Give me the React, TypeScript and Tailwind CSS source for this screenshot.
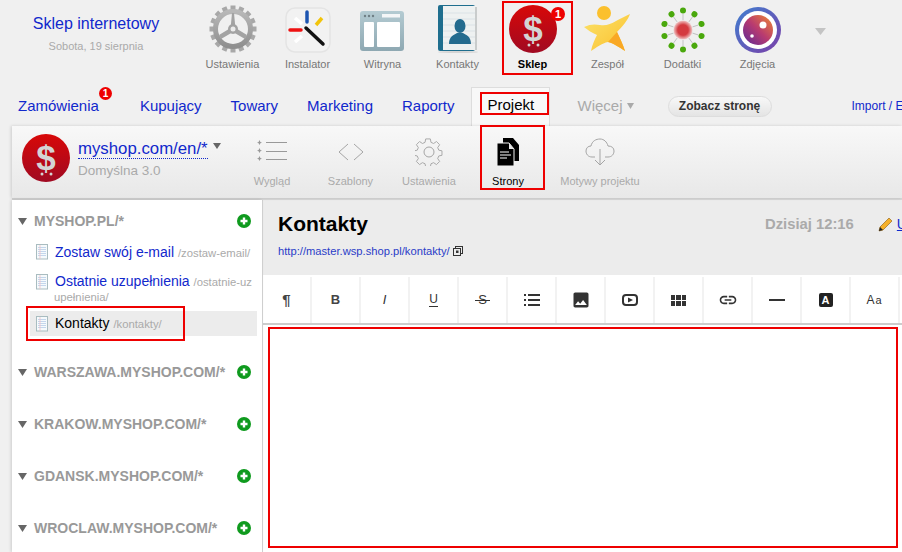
import { MdImage, MdLink } from "react-icons/md";

const FONT = "font-['Liberation_Sans',Arial,sans-serif]";

function ShopLogo({ size }: { size: number }) {
  return (
    <svg width={size} height={size} viewBox="0 0 48 48">
      <defs>
        <linearGradient id={"shop" + size} x1="0" y1="0" x2="0" y2="1">
          <stop offset="0" stopColor="#d80808" />
          <stop offset="1" stopColor="#a00a22" />
        </linearGradient>
      </defs>
      <circle cx="24" cy="24" r="24" fill={"url(#shop" + size + ")"} />
      <text x="24" y="36" textAnchor="middle" fontSize="35" fontWeight="700" fill="#d4d4d4" fontFamily="Liberation Sans">$</text>
      <circle cx="20" cy="40" r="1.5" fill="#d4d4d4" />
      <circle cx="29" cy="40" r="1.5" fill="#d4d4d4" />
    </svg>
  );
}

function GearIcon() {
  const teeth = Array.from({ length: 16 }, (_, i) => i * 22.5);
  return (
    <svg width="48" height="48" viewBox="0 0 48 48">
      <defs>
        <linearGradient id="gear" x1="0" y1="0" x2="0" y2="1">
          <stop offset="0" stopColor="#b8b8b8" />
          <stop offset="1" stopColor="#8f8f8f" />
        </linearGradient>
      </defs>
      {teeth.map((a) => (
        <rect key={a} x="21.5" y="0.5" width="5" height="7" fill="#a8a8a8" transform={`rotate(${a} 24 24)`} />
      ))}
      <circle cx="24" cy="24" r="17.5" fill="none" stroke="url(#gear)" strokeWidth="5" />
      <path d="M21.5 24 L23 8 h2 L26.5 24 Z M24 21.5 L38 30 L36 34 L24 27 Z M24 21.5 L10 30 L12 34 L24 27 Z" fill="#a3a3a3" />
      <circle cx="24" cy="24" r="5" fill="#a3a3a3" />
      <circle cx="24" cy="24" r="2.5" fill="#ececec" />
    </svg>
  );
}

function InstallerIcon() {
  return (
    <svg width="46" height="46" viewBox="0 0 46 46">
      <rect x="1" y="1" width="44" height="44" rx="9" fill="#f2f2f2" stroke="#e4e4e4" strokeWidth="1.5" />
      <path d="M22 5 v10" stroke="#1c54b0" strokeWidth="3.5" strokeLinecap="round" />
      <path d="M37 11 l-6 7" stroke="#f2c40a" strokeWidth="3.5" />
      <path d="M5 23 h11" stroke="#ee1111" strokeWidth="3.5" strokeLinecap="round" />
      <path d="M10 11 l7 6 M10 35 l7 -6" stroke="#ffffff" strokeWidth="3.5" />
      <path d="M21 21 L38 37" stroke="#111111" strokeWidth="3.5" strokeLinecap="round" />
    </svg>
  );
}

function SiteIcon() {
  return (
    <svg width="46" height="42" viewBox="0 0 46 42">
      <defs>
        <linearGradient id="site" x1="0" y1="0" x2="0" y2="1">
          <stop offset="0" stopColor="#b4cbd2" />
          <stop offset="1" stopColor="#8ea8b2" />
        </linearGradient>
      </defs>
      <rect x="0" y="0" width="44" height="40" rx="3" fill="url(#site)" />
      <circle cx="5" cy="5" r="1.2" fill="#707f86" />
      <circle cx="9" cy="5" r="1.2" fill="#707f86" />
      <circle cx="13" cy="5" r="1.2" fill="#707f86" />
      <rect x="22" y="3" width="18" height="3.5" fill="#f4f6f7" />
      <rect x="4" y="11" width="10" height="25" rx="1" fill="#ffffff" />
      <rect x="17" y="11" width="23" height="25" rx="1" fill="#ffffff" />
    </svg>
  );
}

function ContactsIcon() {
  return (
    <svg width="46" height="48" viewBox="0 0 46 48">
      <rect x="3" y="0" width="37" height="46" rx="2" fill="#1f6e8e" />
      <rect x="8" y="1" width="32" height="44" fill="#eef1f1" />
      <path d="M8 8 h32 M8 14 h32 M8 20 h32 M8 26 h32 M8 32 h32 M8 38 h32" stroke="#dbe2e6" strokeWidth="1" />
      <ellipse cx="25" cy="21" rx="5.5" ry="7" fill="#246b8e" />
      <path d="M14 39 c0-8 5-9 8-11 h6 c3 2 8 3 8 11 Z" fill="#246b8e" />
      <rect x="40" y="2" width="2" height="43" fill="#c9cccc" />
      <ellipse cx="23" cy="47" rx="20" ry="1" fill="#d4d4d4" />
    </svg>
  );
}

function StarIcon() {
  return (
    <svg width="48" height="48" viewBox="0 0 48 48">
      <defs>
        <linearGradient id="star" x1="0" y1="0" x2="1" y2="1">
          <stop offset="0" stopColor="#fbe26a" />
          <stop offset="1" stopColor="#fbc02d" />
        </linearGradient>
      </defs>
      <circle cx="20" cy="8" r="7" fill="#fbc02d" />
      <path d="M0 22 C6 19 11 19 16 20 C22 21 27 19 32 16 C37 13 42 11 46 9 C44 15 38 22 33 27 C36 33 39 40 41 46 C35 42 29 38 24 37 C18 38 12 43 7 46 C8 40 11 34 13 30 C8 28 4 25 0 22 Z" fill="url(#star)" />
      <path d="M33 27 C36 33 39 40 41 46 C35 42 29 38 24 37 Z" fill="#f9a825" />
    </svg>
  );
}

function AddonsIcon() {
  const angles = Array.from({ length: 10 }, (_, i) => i * 36);
  return (
    <svg width="46" height="46" viewBox="0 0 46 46">
      <defs>
        <radialGradient id="addon">
          <stop offset="0.55" stopColor="#d43a3f" />
          <stop offset="1" stopColor="#f0c8c8" />
        </radialGradient>
      </defs>
      {angles.map((a) => (
        <g key={a} transform={`rotate(${a} 23 23)`}>
          <path d="M23 7 V13" stroke="#b9b9b9" strokeWidth="0.8" />
          <circle cx="23" cy="3.5" r="3" fill="#4aa80c" />
        </g>
      ))}
      <circle cx="23" cy="23" r="9.5" fill="url(#addon)" />
    </svg>
  );
}

function PhotosIcon() {
  return (
    <svg width="46" height="46" viewBox="0 0 46 46">
      <defs>
        <linearGradient id="ring" x1="0" y1="0" x2="1" y2="1">
          <stop offset="0" stopColor="#3f7fd0" />
          <stop offset="1" stopColor="#7b3fa8" />
        </linearGradient>
        <linearGradient id="lens" x1="1" y1="0" x2="0" y2="1">
          <stop offset="0" stopColor="#f08a30" />
          <stop offset="0.5" stopColor="#b83a70" />
          <stop offset="1" stopColor="#5a2a9a" />
        </linearGradient>
      </defs>
      <circle cx="23" cy="23" r="23" fill="url(#ring)" />
      <circle cx="23" cy="23" r="19" fill="#ffffff" />
      <circle cx="23" cy="23" r="15" fill="url(#lens)" />
      <circle cx="28" cy="18" r="3.5" fill="#ffffff" />
      <circle cx="17" cy="29" r="1.8" fill="#ffffff" />
    </svg>
  );
}

function PlusIcon() {
  return (
    <svg width="14" height="14" viewBox="0 0 14 14" className="shrink-0">
      <circle cx="7" cy="7" r="7" fill="#0f9a1e" />
      <path d="M7 3.5 v7 M3.5 7 h7" stroke="#ffffff" strokeWidth="2.4" />
    </svg>
  );
}

function PageIcon() {
  return (
    <svg width="14" height="16" viewBox="0 0 14 16" className="shrink-0">
      <rect x="1.5" y="0.5" width="11" height="14.5" fill="#f6fafc" stroke="#a9bcc0" />
      <path d="M3 3.5 h8 M3 5.5 h8 M3 7.5 h8 M3 9.5 h8 M3 11.5 h8" stroke="#c4d6ec" />
      <path d="M5 1 v14" stroke="#f0c0c8" strokeWidth="0.8" />
    </svg>
  );
}

function Triangle({ className }: { className: string }) {
  return (
    <svg viewBox="0 0 10 8" preserveAspectRatio="none" className={className}>
      <path d="M0 0 H10 L5 8 Z" fill="currentColor" />
    </svg>
  );
}

function TopItem({ label, icon, active, badge }: { label: string; icon: React.ReactNode; active?: boolean; badge?: boolean }) {
  return (
    <div className="relative flex h-[72px] w-[75px] shrink-0 flex-col items-center">
      <div className="flex h-[51px] items-end justify-center">{icon}</div>
      <div className={active ? "mt-[4px] text-[11px] leading-[14px] font-bold text-black" : "mt-[4px] text-[11px] leading-[14px] text-[#777]"}>{label}</div>
      {badge && (
        <span className="absolute top-[5px] left-[56px] flex h-[14px] w-[14px] items-center justify-center rounded-full bg-[#ee0000] text-[11px] font-bold text-white">1</span>
      )}
      {active && <div className="absolute -top-[1px] left-[7px] h-[74px] w-[71px] border-2 border-[#ee0000]" />}
    </div>
  );
}

function Tool({ label, icon, width, active }: { label: string; icon: React.ReactNode; width: string; active?: boolean }) {
  return (
    <div className={"flex shrink-0 flex-col items-center " + width}>
      <div className="flex h-[44px] items-center justify-center">{icon}</div>
      <div className={active ? "text-[11px] leading-[14px] text-black" : "text-[11px] leading-[14px] text-[#aaa]"}>{label}</div>
    </div>
  );
}

function Group({ name }: { name: string }) {
  return (
    <div className="flex h-[52px] items-center pr-[11px] pl-[6px]">
      <Triangle className="mr-[7px] h-[7px] w-[9px] shrink-0 text-[#666]" />
      <div className="flex-1 text-[14px] font-bold text-[#999]">{name}</div>
      <PlusIcon />
    </div>
  );
}

function Cell({ children }: { children: React.ReactNode }) {
  return <div className="flex h-full w-[49px] shrink-0 items-center justify-center border-r-2 border-[#f2f2f2] text-[#333]">{children}</div>;
}

export default function App() {
  return (
    <div className={"relative h-[552px] w-[902px] overflow-hidden bg-[#f0f0f0] " + FONT}>
      {/* top icons */}
      <div className="flex h-[86px] pt-[2px]">
        <div className="mr-[3px] flex w-[192px] shrink-0 flex-col items-center pt-[12px]">
          <div className="text-[16px] leading-[20px] text-[#1128cc]">Sklep internetowy</div>
          <div className="mt-[5px] text-[11px] leading-[14px] text-[#aaa]">Sobota, 19 sierpnia</div>
        </div>
        <TopItem label="Ustawienia" icon={<GearIcon />} />
        <TopItem label="Instalator" icon={<InstallerIcon />} />
        <TopItem label="Witryna" icon={<SiteIcon />} />
        <TopItem label="Kontakty" icon={<ContactsIcon />} />
        <TopItem label="Sklep" icon={<ShopLogo size={48} />} active badge />
        <TopItem label="Zespół" icon={<StarIcon />} />
        <TopItem label="Dodatki" icon={<AddonsIcon />} />
        <TopItem label="Zdjęcia" icon={<PhotosIcon />} />
        <Triangle className="mt-[26px] ml-[20px] h-[7px] w-[11px] text-[#c4c4c4]" />
      </div>

      {/* tabs */}
      <div className="flex h-[40px] items-center pl-[18px] text-[15px] text-[#1128cc]">
        <div className="relative mr-[41px]">
          Zamówienia
          <span className="absolute -top-[8px] left-[81px] flex h-[13px] w-[13px] items-center justify-center rounded-full bg-[#ee0000] text-[10px] font-bold text-white">1</span>
        </div>
        <div className="mr-[29px]">Kupujący</div>
        <div className="mr-[29px]">Towary</div>
        <div className="mr-[29px]">Marketing</div>
        <div className="mr-[16px]">Raporty</div>
        <div className="relative mt-[1px] flex h-[39px] w-[79px] shrink-0 items-center self-end border border-b-0 border-[#dddddd] bg-[#f8f8f8] pb-[4px] pl-[16px] text-black">
          Projekt
          <div className="absolute top-[4px] left-[8px] h-[23px] w-[69px] border-2 border-[#ee0000]" />
        </div>
        <div className="ml-[28px] flex items-center text-[#aaa]">
          Więcej
          <Triangle className="ml-[4px] h-[6px] w-[7px]" />
        </div>
        <div className="ml-[34px] flex h-[21px] w-[104px] shrink-0 items-center justify-center rounded-full border border-[#dddddd] bg-gradient-to-b from-[#f8f8f8] to-[#e4e4e4] text-[12px] font-bold whitespace-nowrap text-[#333]">Zobacz stronę</div>
        <div className="ml-[80px] text-[12px] whitespace-nowrap">Import / Eksport</div>
      </div>

      {/* panel */}
      <div className="relative ml-[12px] flex h-[72px] bg-gradient-to-b from-[#f8f8f8] to-[#e8e8e8] shadow-[-1px_0_3px_rgba(0,0,0,0.15)]">
        <div className="ml-[10px] mt-[8px] shrink-0">
          <ShopLogo size={48} />
        </div>
        <div className="ml-[8px] w-[145px] shrink-0 pt-[13px]">
          <div className="flex items-start">
            <span className="border-b border-dotted border-[#1128cc] text-[16.8px] leading-[19px] whitespace-nowrap text-[#1128cc]">myshop.com/en/*</span>
            <Triangle className="mt-[4px] ml-[5px] h-[6px] w-[8px] shrink-0 text-[#666]" />
          </div>
          <div className="mt-[3px] text-[13.5px] leading-[18px] text-[#aaa]">Domyślna 3.0</div>
        </div>
        <div className="flex pt-[4px]">
          <Tool
            label="Wygląd"
            width="w-[78px] ml-[10px]"
            icon={
              <svg width="30" height="24" viewBox="0 0 30 24" stroke="#999" fill="none">
                <path d="M9 2.5 H30 M9 11.5 H30 M9 19.5 H30" />
                <path d="M2.5 0 L3.4 2 L5 2.4 L3.4 3.2 L2.5 5 L1.6 3.2 L0 2.4 L1.6 2 Z M2.5 8 L3.4 10 L5 10.4 L3.4 11.2 L2.5 13 L1.6 11.2 L0 10.4 L1.6 10 Z M2.5 16 L3.4 18 L5 18.4 L3.4 19.2 L2.5 21 L1.6 19.2 L0 18.4 L1.6 18 Z" fill="#999" stroke="none" />
              </svg>
            }
          />
          <Tool
            label="Szablony"
            width="w-[79px]"
            icon={
              <svg width="26" height="20" viewBox="0 0 26 20" stroke="#a5a5a5" fill="none">
                <path d="M10 2 L1 10 L10 18 M16 2 L25 10 L16 18" />
              </svg>
            }
          />
          <Tool
            label="Ustawienia"
            width="w-[78px]"
            icon={
              <svg width="28" height="28" viewBox="0 0 28 28" stroke="#a5a5a5" fill="none">
                <circle cx="14" cy="14" r="5" />
                <path d="M11.5 1 h5 l0.7 3.7 l2.8 1.2 l3.1-2.1 l3.4 3.4 l-2.1 3.1 l1.2 2.8 l3.4 0.7 v4.8 l-3.4 0.7 l-1.2 2.8 l2.1 3.1 l-3.4 3.4 l-3.1-2.1 l-2.8 1.2 l-0.7 3.4 h-5 l-0.7-3.4 l-2.8-1.2 l-3.1 2.1 l-3.4-3.4 l2.1-3.1 l-1.2-2.8 l-3.4-0.7 v-4.8 l3.4-0.7 l1.2-2.8 l-2.1-3.1 l3.4-3.4 l3.1 2.1 l2.8-1.2 Z" transform="scale(0.93)" />
              </svg>
            }
          />
          <Tool
            label="Strony"
            width="w-[80px]"
            active
            icon={
              <svg width="22" height="28" viewBox="0 0 22 28">
                <path d="M6 0 H16 L22 7 V23 H6 Z" fill="#000" />
                <path d="M0 5 H12 L17 11 V28 H0 Z" fill="#000" stroke="#f2f2f2" strokeWidth="1" />
                <path d="M12 5 V11 H17 Z" fill="#e8e8e8" />
                <path d="M3 14 H12 M3 17 H14 M3 20 H10" stroke="#fff" strokeWidth="1" />
              </svg>
            }
          />
          <Tool
            label="Motywy projektu"
            width="w-[104px]"
            icon={
              <svg width="30" height="28" viewBox="0 0 30 28" stroke="#a5a5a5" fill="none">
                <path d="M10 19 H7 C3 19 1 16 1 13 C1 10 3 8 6 8 C7 3 11 1 15 1 C19 1 22 4 23 8 C27 8 29 10 29 13 C29 16 27 19 23 19 H20" />
                <path d="M15 11 V27 M10 22 L15 27 L20 22" />
              </svg>
            }
          />
        </div>
        <div className="absolute top-[-1px] left-[468px] h-[65px] w-[65px] border-2 border-[#ee0000]" />
      </div>

      {/* body */}
      <div className="ml-[12px] flex h-[354px] border-t-2 border-[#d8d8d8]">
        <div className="relative w-[250px] shrink-0 bg-white pt-[9px] shadow-[-1px_0_3px_rgba(0,0,0,0.15)]">
          <div className="flex h-[24px] items-center pr-[11px] pl-[6px]">
            <Triangle className="mr-[7px] h-[7px] w-[9px] shrink-0 text-[#666]" />
            <div className="flex-1 text-[14px] font-bold text-[#999]">MYSHOP.PL/*</div>
            <PlusIcon />
          </div>
          <div className="mt-[4px] pl-[23px] text-[14px] leading-[16px]">
            <div className="flex h-[30px] items-center gap-[6px]">
              <PageIcon />
              <div className="whitespace-nowrap text-[#1128cc]">
                Zostaw swój e-mail <span className="text-[11.3px] text-[#aaa]">/zostaw-email/</span>
              </div>
            </div>
            <div className="flex h-[29px] items-center gap-[6px]">
              <PageIcon />
              <div className="whitespace-nowrap text-[#1128cc]">
                Ostatnie uzupełnienia <span className="text-[11.3px] text-[#aaa]">/ostatnie-uz</span>
              </div>
            </div>
            <div className="-mt-[7px] ml-[19px] h-[16px] text-[11.3px] text-[#aaa]">upełnienia/</div>
          </div>
          <div className="relative mt-[6px] ml-[18px] flex h-[25px] w-[227px] items-center gap-[6px] bg-[#ececec] pl-[5px] text-[14px]">
            <PageIcon />
            <div className="text-black">
              Kontakty <span className="text-[11.3px] text-[#aaa]">/kontakty/</span>
            </div>
            <div className="absolute -top-[5px] -left-[4px] h-[35px] w-[159px] border-2 border-[#ee0000]" />
          </div>
          <div className="mt-[10px]">
            <Group name="WARSZAWA.MYSHOP.COM/*" />
            <Group name="KRAKOW.MYSHOP.COM/*" />
            <Group name="GDANSK.MYSHOP.COM/*" />
            <Group name="WROCLAW.MYSHOP.COM/*" />
          </div>
        </div>

        <div className="min-w-0 flex-1 border-l border-[#d4d4d4] bg-white">
          <div className="flex h-[75px] bg-[#ececec] pt-[12px] pl-[15px]">
            <div className="w-[487px] shrink-0">
              <div className="text-[21px] leading-[24px] font-bold text-black">Kontakty</div>
              <div className="mt-[8px] flex items-center text-[11.2px] leading-[14px] text-[#2a3cc8]">
                http://master.wsp.shop.pl/kontakty/
                <svg width="10" height="10" viewBox="0 0 10 10" fill="none" stroke="#333" className="ml-[3px]">
                  <rect x="2.5" y="0.5" width="7" height="7" />
                  <rect x="0.5" y="2.5" width="7" height="7" fill="#ececec" />
                  <rect x="3" y="4.5" width="2.5" height="2.5" fill="#333" stroke="none" />
                </svg>
              </div>
            </div>
            <div className="flex items-start pt-[2px] whitespace-nowrap">
              <div className="text-[14.8px] leading-[20px] font-bold text-[#aaa]">Dzisiaj 12:16</div>
              <svg width="15" height="15" viewBox="0 0 15 15" className="mt-[3px] ml-[24px] shrink-0">
                <path d="M1 14 L2 10 L11 1 L14 4 L5 13 Z" fill="#f5b02a" stroke="#8a5a10" strokeWidth="0.6" />
                <path d="M1 14 L2 10 L5 13 Z" fill="#222" />
              </svg>
              <span className="ml-[4px] text-[14px] leading-[20px] text-[#1128cc] underline">Usuń</span>
            </div>
          </div>
          <div className="flex h-[50px] items-stretch border-b-2 border-[#cccccc] pt-[2px]">
            <Cell><span className="text-[15px] font-bold text-[#444]">¶</span></Cell>
            <Cell><span className="text-[13px] font-bold text-[#444]">B</span></Cell>
            <Cell><span className="text-[13px] italic">I</span></Cell>
            <Cell><span className="border-b border-[#333] text-[12px] leading-[13px]">U</span></Cell>
            <Cell>
              <span className="relative text-[13px] leading-[14px]">
                S
                <span className="absolute top-[7px] -left-[3px] h-px w-[15px] bg-[#333]" />
              </span>
            </Cell>
            <Cell>
              <svg width="16" height="12" viewBox="0 0 16 12" fill="#333">
                <path d="M0 0 h2 v2 h-2 Z M0 5 h2 v2 h-2 Z M0 10 h2 v2 h-2 Z M4 0 h12 v2 h-12 Z M4 5 h12 v2 h-12 Z M4 10 h12 v2 h-12 Z" />
              </svg>
            </Cell>
            <Cell><MdImage size={20} /></Cell>
            <Cell>
              <svg width="16" height="12" viewBox="0 0 16 12" fill="none">
                <rect x="1" y="1" width="14" height="10" rx="3" stroke="#333" strokeWidth="2" />
                <path d="M6 3.5 L11 6 L6 8.5 Z" fill="#333" />
              </svg>
            </Cell>
            <Cell>
              <svg width="15" height="11" viewBox="0 0 15 11" fill="#333">
                <path d="M0 0 h4 v5 h-4 Z M5 0 h5 v5 h-5 Z M11 0 h4 v5 h-4 Z M0 6 h4 v5 h-4 Z M5 6 h5 v5 h-5 Z M11 6 h4 v5 h-4 Z" />
              </svg>
            </Cell>
            <Cell><MdLink size={20} /></Cell>
            <Cell><div className="h-[2px] w-[16px] bg-[#333]" /></Cell>
            <Cell>
              <span className="flex h-[14px] w-[14px] items-center justify-center rounded-[2px] bg-[#222] text-[11px] font-bold text-white">A</span>
            </Cell>
            <Cell>
              <span className="text-[12px] tracking-[1px]">A<span className="text-[11px]">a</span></span>
            </Cell>
          </div>
          <div className="mt-[2px] ml-[5px] h-[221px] w-[630px] border-2 border-[#ee0000] bg-white" />
        </div>
      </div>
    </div>
  );
}
